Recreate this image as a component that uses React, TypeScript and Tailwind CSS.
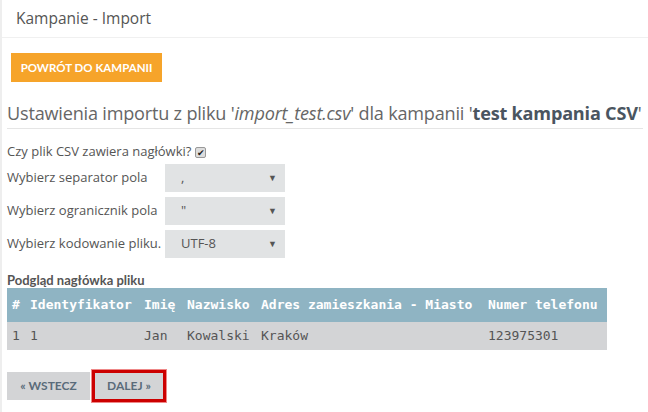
import React from "react";

const sans = { fontFamily: '"Open Sans", "Noto Sans", sans-serif' };
const cond = { fontFamily: 'Lato, "Open Sans", sans-serif' };
const mono = { fontFamily: '"DejaVu Sans Mono", monospace' };

function SelectBox({ value }: { value: string }) {
  return (
    <div className="flex h-[28px] w-[120px] items-center justify-between bg-[#e1e3e4] pl-[16px] pr-[8px] text-[13px] text-[#555]">
      <span>{value}</span>
      <span className="text-[9px] text-[#555]">▼</span>
    </div>
  );
}

export default function App() {
  const headers = ["#", "Identyfikator", "Imię", "Nazwisko", "Adres zamieszkania - Miasto", "Numer telefonu"];
  const widths = ["w-[18px]", "w-[114px]", "w-[43px]", "w-[74px]", "w-[227px]", "w-[124px]"];
  const row = ["1", "1", "Jan", "Kowalski", "Kraków", "123975301"];
  return (
    <div className="min-h-[412px] w-[648px] border-l-2 border-[#eeeeee] bg-white text-[#555]" style={sans}>
      <div className="flex h-[38px] items-center border-b border-[#f0f0f0] pl-[14px] text-[15.5px] text-[#555]">
        Kampanie - Import
      </div>
      <div className="px-[5px]">
        <div className="ml-[4px] mt-[15px] flex h-[29px] w-[151px] items-center justify-center bg-[#f6a42a] text-[11.5px] font-bold text-white" style={cond}>
          POWRÓT DO KAMPANII
        </div>
        <div className="mt-[18px] border-b border-[#e5e5e5] pb-[2px] text-[18.1px] leading-[26px] tracking-[-0.2px] text-[#666] whitespace-nowrap">
          Ustawienia importu z pliku '<i>import_test.csv</i>' dla kampanii '
          <b className="text-[#4a5560]">test kampania CSV</b>'
        </div>
        <div className="mt-[14px] flex h-[18px] items-center text-[13px]">
          Czy plik CSV zawiera nagłówki?
          <span className="ml-[4px] flex h-[11px] w-[11px] items-center justify-center rounded-[2px] border border-[#999] bg-[#ddd] text-[9px] leading-none text-[#222]">
            ✔
          </span>
        </div>
        <div className="mt-[3px] flex flex-col gap-[5px] text-[13px]">
          {[
            ["Wybierz separator pola", ","],
            ["Wybierz ogranicznik pola", '"'],
            ["Wybierz kodowanie pliku.", "UTF-8"],
          ].map(([l, v]) => (
            <div key={l} className="flex items-center">
              <div className="w-[158px]">{l}</div>
              <SelectBox value={v} />
            </div>
          ))}
        </div>
        <div className="mt-[14px] h-[16px] text-[13px] font-bold leading-[16px] text-[#555]" style={cond}>
          Podgląd nagłówka pliku
        </div>
        <table className="w-[600px] table-fixed border-collapse text-[13px]" style={mono}>
          <thead>
            <tr className="h-[34px] bg-[#8fb4c3] text-white">
              {headers.map((h, i) => (
                <th key={h} className={`${widths[i]} pl-[5px] text-left font-bold whitespace-nowrap`}>
                  {h}
                </th>
              ))}
            </tr>
          </thead>
          <tbody>
            <tr className="h-[28px] bg-[#d3d4d6] text-[#555]">
              {row.map((c, i) => (
                <td key={i} className="pl-[5px] whitespace-nowrap">
                  {c}
                </td>
              ))}
            </tr>
          </tbody>
        </table>
        <div className="mt-[19px] flex items-center gap-[1px]" style={cond}>
          <div className="flex h-[28px] w-[83px] items-center justify-center bg-[#d3d4d6] text-[12px] font-bold text-[#5a6b7a]">
            « WSTECZ
          </div>
          <div className="border border-[#e88]">
            <div className="border-[3px] border-[#cc0000]">
              <div className="flex h-[26px] w-[68px] items-center justify-center bg-[#d3d4d6] text-[12px] font-bold text-[#5a6b7a]">
                DALEJ »
              </div>
            </div>
          </div>
        </div>
      </div>
    </div>
  );
}
